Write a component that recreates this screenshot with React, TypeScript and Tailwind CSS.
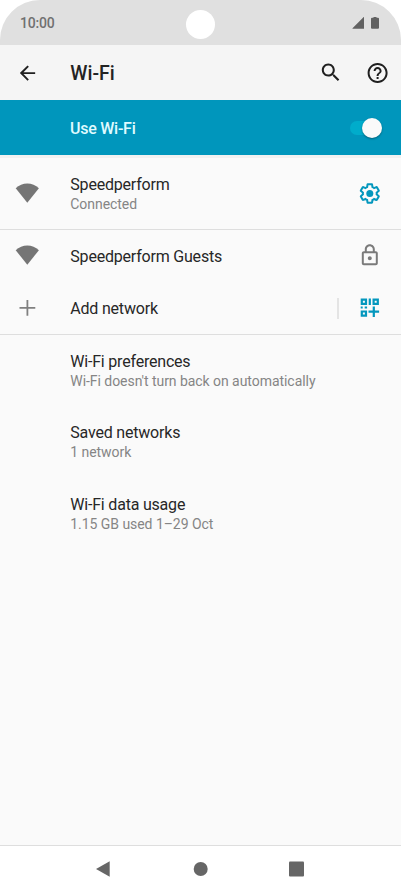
import type { ReactNode } from "react";

function WifiIcon() {
  return (
    <svg className="h-6 w-6" viewBox="-0.3 1 24 24" fill="#757575">
      <path d="M12 21.8L.4 7.200C3.600 4.100 7.700 2.400 12 2.400s8.400 1.700 11.600 4.800z" />
    </svg>
  );
}

function LockIcon() {
  return (
    <svg className="h-6 w-6" viewBox="0.2 0.8 24 24" fill="#7a7a7a">
      <path d="M18 8h-1V6c0-2.76-2.24-5-5-5S7 3.24 7 6v2H6c-1.100 0-2 .9-2 2v10c0 1.100.9 2 2 2h12c1.100 0 2-.9 2-2V10c0-1.100-.9-2-2-2zM9 6c0-1.660 1.340-3 3-3s3 1.340 3 3v2H9V6zm9 14H6V10h12v10zm-6-3c1.100 0 2-.9 2-2s-.9-2-2-2-2 .9-2 2 .9 2 2 2z" />
    </svg>
  );
}

function GearIcon() {
  return (
    <svg className="h-6 w-6" viewBox="0.2 0.5 24 24" fill="#0497bd">
      <path d="M13.85 22.25h-3.7c-.74 0-1.36-.54-1.45-1.27l-.27-1.89c-.27-.14-.53-.29-.79-.46l-1.8.72c-.7.26-1.47-.03-1.81-.65L2.2 15.53c-.35-.66-.2-1.44.36-1.88l1.53-1.19c-.01-.15-.02-.3-.02-.46 0-.15.01-.31.02-.46l-1.52-1.19c-.59-.45-.74-1.26-.37-1.88l1.85-3.19c.34-.62 1.11-.9 1.79-.63l1.81.73c.26-.17.52-.32.78-.46l.27-1.91c.09-.7.71-1.25 1.44-1.25h3.7c.74 0 1.36.54 1.45 1.27l.27 1.89c.27.14.53.29.79.46l1.8-.72c.71-.26 1.48.03 1.82.65l1.84 3.18c.36.66.2 1.44-.36 1.88l-1.52 1.19c.01.15.02.3.02.46s-.01.31-.02.46l1.52 1.19c.56.45.72 1.23.37 1.86l-1.86 3.22c-.34.62-1.11.9-1.8.63l-1.8-.72c-.26.17-.52.32-.78.46l-.27 1.91c-.1.68-.72 1.22-1.46 1.22zm-3.23-2h2.76l.37-2.55.53-.22c.44-.18.88-.44 1.34-.78l.45-.34 2.38.96 1.38-2.4-2.03-1.58.07-.56c.03-.26.06-.51.06-.78s-.03-.53-.06-.78l-.07-.56 2.03-1.58-1.39-2.4-2.39.96-.45-.35c-.42-.32-.87-.58-1.33-.77l-.52-.22-.37-2.55h-2.76l-.37 2.55-.53.21c-.44.19-.88.44-1.34.79l-.45.33-2.38-.95-1.39 2.39 2.03 1.58-.07.56a7 7 0 0 0-.06.79c0 .26.02.53.06.78l.07.56-2.03 1.58 1.38 2.4 2.39-.96.45.35c.43.33.86.58 1.33.77l.53.22.38 2.55z" />
      <circle cx="12" cy="12" r="3.5" />
    </svg>
  );
}

function QrAddIcon() {
  return (
    <svg className="h-6 w-6" viewBox="0.3 0.4 24 24" fill="#0497bd">
      <path
        fillRule="evenodd"
        d="M3 3h6.400v6.400H3zM5.200 5.200v2h2v-2zM14.800 3h6.400v6.400h-6.400zM17 5.200v2h2v-2zM3 14.800h6.400v6.400H3zM5.200 17v2h2v-2z"
      />
      <path d="M11 3h2.200v6.400H11zM3 11h2v2H3zM7 11h2.400v2H7zM15 11h2.200v4h4.200v2.200h-4.200v4.200H15v-4.200h-4.200V15H15z" />
    </svg>
  );
}

function Row({
  icon,
  title,
  subtitle,
  action,
  className,
}: {
  icon?: ReactNode;
  title: string;
  subtitle?: string;
  action?: ReactNode;
  className: string;
}) {
  return (
    <div className={`flex shrink-0 items-center ${className}`}>
      <div className="flex w-[70.3px] shrink-0 pl-[15px]">{icon}</div>
      <div className="min-w-0 flex-1 whitespace-nowrap">
        <div className="-mb-px pt-px text-[16px] leading-5 tracking-[-0.2px] text-[#272727]">{title}</div>
        {subtitle && (
          <div className="text-[14px] leading-5 tracking-[-0.05px] text-[#858585]">{subtitle}</div>
        )}
      </div>
      {action && <div className="flex shrink-0 items-center pr-[19px]">{action}</div>}
    </div>
  );
}

export default function App() {
  return (
    <div className="flex h-[892px] w-[401px] flex-col overflow-hidden rounded-t-[40px] bg-[#fafafa] font-['Roboto',sans-serif]">
      <div className="relative flex h-[45px] shrink-0 items-center justify-between bg-[#e0e0e0] pr-[21px] pl-5">
        <span className="pt-0.5 text-[14px] font-medium tracking-[-0.2px] text-[#707070]">10:00</span>
        <div className="absolute top-[10px] left-[186px] h-[29px] w-[29px] rounded-full bg-white" />
        <svg className="h-3 w-7" viewBox="0 0.3 28 12" fill="#616161">
          <path d="M0.500 12V11.500L12 0V12zM19 2q0-1 1-1h1.500V0h3v1H26q1 0 1 1v9q0 1-1 1h-6q-1 0-1-1z" />
        </svg>
      </div>

      <header className="flex h-[55px] shrink-0 items-center bg-[#f5f5f5] pt-px pr-[11px] pl-4">
        <svg className="h-[23px] w-[23px]" viewBox="0 0.4 24 24" fill="#202020">
          <path d="M20 11H7.830l5.590-5.590L12 4l-8 8 8 8 1.410-1.410L7.830 13H20v-2z" />
        </svg>
        <h1 className="ml-[31.3px] flex-1 pt-0.5 text-[19.500px] font-medium text-[#232323]">Wi-Fi</h1>
        <svg className="h-6 w-6" viewBox="0.2 0.4 24 24" fill="#202020">
          <path d="M15.500 14h-.79l-.28-.27C15.410 12.590 16 11.110 16 9.500 16 5.910 13.090 3 9.500 3S3 5.910 3 9.500 5.910 16 9.500 16c1.610 0 3.090-.59 4.230-1.570l.27.28v.79l5 4.990L20.490 19l-4.990-5zm-6 0C7.010 14 5 11.990 5 9.500S7.010 5 9.500 5 14 7.010 14 9.500 11.990 14 9.500 14z" />
        </svg>
        <svg className="ml-[23px] h-6 w-6" viewBox="0.4 0 24 24" fill="#202020">
          <path d="M11 18h2v-2h-2v2zm1-16C6.480 2 2 6.480 2 12s4.480 10 10 10 10-4.480 10-10S17.520 2 12 2zm0 18c-4.410 0-8-3.590-8-8s3.590-8 8-8 8 3.590 8 8-3.590 8-8 8zm0-14c-2.210 0-4 1.790-4 4h2c0-1.100.9-2 2-2s2 .9 2 2c0 2-3 1.750-3 5h2c0-2.250 3-2.500 3-5 0-2.210-1.790-4-4-4z" />
        </svg>
      </header>

      <div className="flex h-[55px] shrink-0 items-center justify-between bg-[#0096bc] pt-px pr-[19px] pl-[70px]">
        <span className="pt-0.5 text-[16px] font-medium tracking-[-0.25px] text-[#e0fbff]">Use Wi-Fi</span>
        <div className="flex h-[14px] w-8 items-center justify-end rounded-full bg-[#00accb]">
          <div className="h-5 w-5 shrink-0 rounded-full bg-[#fafafa] shadow-[0_1px_2px_rgba(0,0,0,0.35)]" />
        </div>
      </div>
      <div className="h-[3px] shrink-0 bg-[#f1f1f1]" />

      <Row
        className="h-[72px] border-b border-[#dedede] pt-px"
        icon={<WifiIcon />}
        title="Speedperform"
        subtitle="Connected"
        action={<GearIcon />}
      />
      <Row className="h-[52px] pb-px" icon={<WifiIcon />} title="Speedperform Guests" action={<LockIcon />} />
      <Row
        className="h-[53px] border-b border-[#dedede]"
        icon={
          <svg className="h-6 w-6" viewBox="0 0 24 24" fill="#808080">
            <path d="M4.500 11h7V4h1.800v7h7v1.800h-7v7h-1.800v-7h-7z" />
          </svg>
        }
        title="Add network"
        action={
          <>
            <div className="mr-[19.500px] h-[21px] w-[1.5px] bg-[#e4e4e4]" />
            <QrAddIcon />
          </>
        }
      />
      <Row className="h-[71px]" title="Wi-Fi preferences" subtitle="Wi-Fi doesn't turn back on automatically" />
      <Row className="h-[72px]" title="Saved networks" subtitle="1 network" />
      <Row className="h-[71px]" title="Wi-Fi data usage" subtitle="1.15 GB used 1–29 Oct" />

      <nav className="mt-auto flex h-[47px] shrink-0 items-center border-t border-[#dedede] bg-white pl-[96px]">
        <svg className="h-4 w-[210px]" viewBox="0 0 210 16" fill="#666">
          <path d="M0 8L13.700 .2v15.600z" />
          <circle cx="104.7" cy="8" r="7" />
          <rect x="193" y=".5" width="15" height="15" rx="1" />
        </svg>
      </nav>
    </div>
  );
}
